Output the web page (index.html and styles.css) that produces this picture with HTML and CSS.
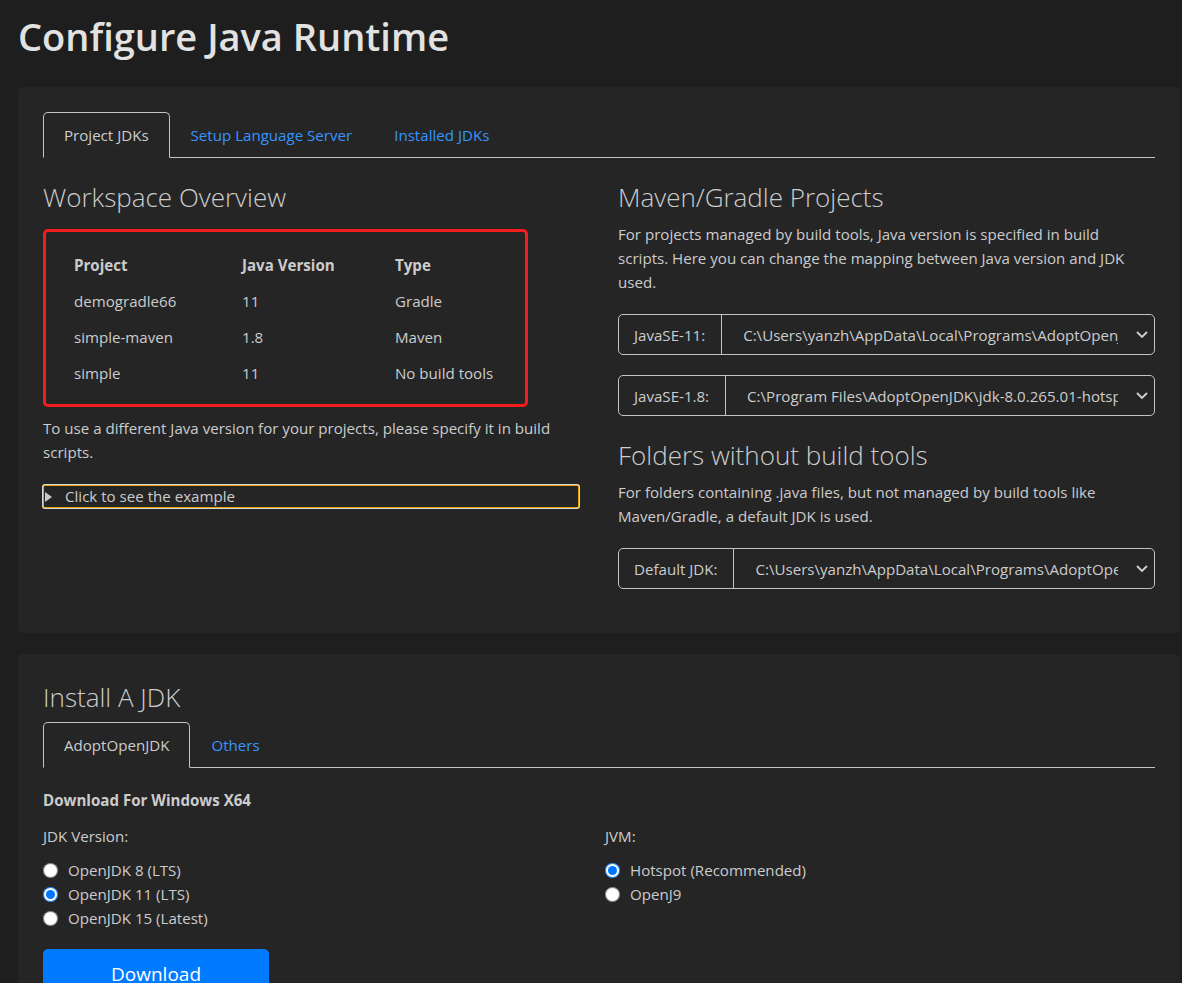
FILE: index.html
```html
<!DOCTYPE html>
<html lang="en">
<head>
<meta charset="utf-8">
<title>Configure Java Runtime</title>
<link rel="stylesheet" href="styles.css">
</head>
<body>
<main class="page">
  <h1 class="title">Configure Java Runtime</h1>

  <section class="card card-runtime">
    <nav class="tabs">
      <span class="tab active">Project JDKs</span>
      <span class="tab">Setup Language Server</span>
      <span class="tab">Installed JDKs</span>
    </nav>

    <div class="cols">
      <div class="col col-left">
        <h2 class="heading">Workspace Overview</h2>
        <div class="overview">
          <div class="ov-row ov-head">
            <span>Project</span><span>Java Version</span><span>Type</span>
          </div>
          <div class="ov-row">
            <span>demogradle66</span><span>11</span><span>Gradle</span>
          </div>
          <div class="ov-row">
            <span>simple-maven</span><span>1.8</span><span>Maven</span>
          </div>
          <div class="ov-row">
            <span>simple</span><span>11</span><span>No build tools</span>
          </div>
        </div>
        <p class="text note">To use a different Java version for your projects, please specify it in build scripts.</p>
        <div class="details"><span class="marker"></span><span>Click to see the example</span></div>
      </div>

      <div class="col col-right">
        <h2 class="heading">Maven/Gradle Projects</h2>
        <p class="text desc">For projects managed by build tools, Java version is specified in build scripts. Here you can change the mapping between Java version and JDK used.</p>
        <div class="select-group sg-1">
          <span class="sg-label">JavaSE-11:</span>
          <span class="sg-value"><span class="sg-text">C:\Users\yanzh\AppData\Local\Programs\AdoptOpenJDK\jdk-11.0.8.10-hotspot\</span></span>
          <svg class="chev" viewBox="0 0 12 8" width="12" height="8"><polyline points="1,1 6,6 11,1" fill="none" stroke="#d0d0d0" stroke-width="1.8"/></svg>
        </div>
        <div class="select-group sg-2">
          <span class="sg-label">JavaSE-1.8:</span>
          <span class="sg-value"><span class="sg-text">C:\Program Files\AdoptOpenJDK\jdk-8.0.265.01-hotspot\</span></span>
          <svg class="chev" viewBox="0 0 12 8" width="12" height="8"><polyline points="1,1 6,6 11,1" fill="none" stroke="#d0d0d0" stroke-width="1.8"/></svg>
        </div>

        <h2 class="heading heading-second">Folders without build tools</h2>
        <p class="text desc">For folders containing .java files, but not managed by build tools like Maven/Gradle, a default JDK is used.</p>
        <div class="select-group sg-3">
          <span class="sg-label">Default JDK:</span>
          <span class="sg-value"><span class="sg-text">C:\Users\yanzh\AppData\Local\Programs\AdoptOpenJDK\jdk-11.0.8.10-hotspot\</span></span>
          <svg class="chev" viewBox="0 0 12 8" width="12" height="8"><polyline points="1,1 6,6 11,1" fill="none" stroke="#d0d0d0" stroke-width="1.8"/></svg>
        </div>
      </div>
    </div>
  </section>

  <section class="card card-install">
    <h2 class="heading">Install A JDK</h2>
    <nav class="tabs">
      <span class="tab active">AdoptOpenJDK</span>
      <span class="tab">Others</span>
    </nav>
    <div class="download-for">Download For Windows X64</div>
    <div class="install-cols">
      <div class="install-col">
        <div class="text group-label">JDK Version:</div>
        <label class="radio"><input type="radio" name="jdk"><span>OpenJDK 8 (LTS)</span></label>
        <label class="radio"><input type="radio" name="jdk" checked><span>OpenJDK 11 (LTS)</span></label>
        <label class="radio"><input type="radio" name="jdk"><span>OpenJDK 15 (Latest)</span></label>
      </div>
      <div class="install-col">
        <div class="text group-label">JVM:</div>
        <label class="radio"><input type="radio" name="jvm" checked><span>Hotspot (Recommended)</span></label>
        <label class="radio"><input type="radio" name="jvm"><span>OpenJ9</span></label>
      </div>
    </div>
    <button class="btn-download" type="button">Download</button>
  </section>
</main>
</body>
</html>
```

FILE: styles.css
```css
* {
  box-sizing: border-box;
}

html, body {
  margin: 0;
  background: #1e1e1e;
}

body {
  font-family: "Open Sans", "Noto Sans", sans-serif;
  font-size: 15.1px;
  line-height: 24px;
  color: #cccccc;
}

.page {
  padding: 12px 2px 40px 18px;
}

.title {
  margin: 0 0 27px;
  font-size: 38px;
  line-height: 48px;
  font-weight: 600;
  color: #e2e2e2;
}

.card {
  background: #252526;
  border-radius: 5px;
  padding: 25px 25px 44px;
}

.card-install {
  margin-top: 21px;
  padding-bottom: 30px;
}

.tabs {
  display: flex;
  border-bottom: 1px solid #c3c3c3;
}

.tab {
  display: block;
  padding: 10px 20px;
  border: 1px solid transparent;
  border-radius: 5px 5px 0 0;
  margin-bottom: -1px;
  color: #3794ff;
  white-space: nowrap;
}

.tab.active {
  color: #cccccc;
  border-color: #c3c3c3 #c3c3c3 #252526;
  background: #252526;
}

.cols {
  display: grid;
  grid-template-columns: 541px 537px;
  column-gap: 34px;
}

.heading {
  margin: 22px 0 0;
  font-size: 26px;
  line-height: 34px;
  font-weight: 300;
  color: #cccccc;
}

.overview {
  width: 485px;
  margin-top: 15px;
  border: 3px solid #f41c1c;
  border-radius: 5px;
  padding: 15px 20px 13px 28px;
}

.ov-row {
  display: grid;
  grid-template-columns: 168px 153px 1fr;
  line-height: 36px;
}

.ov-head {
  font-weight: 700;
}

.text {
  margin: 0;
}

.note {
  margin-top: 9px;
}

.details {
  display: flex;
  align-items: center;
  width: 538px;
  height: 25px;
  margin: 20px 0 0 -1px;
  border: 2px solid #e8a10b;
  outline: 1px solid #d8d8d8;
  outline-offset: -1px;
  border-radius: 3px;
  line-height: 21px;
}

.marker {
  width: 0;
  height: 0;
  margin: 0 13px 0 1px;
  border-top: 5px solid transparent;
  border-bottom: 5px solid transparent;
  border-left: 7px solid #c8c8c8;
}

.desc {
  margin-top: 8px;
  max-width: 520px;
}

.heading-second {
  margin-top: 22px;
}

.select-group {
  display: flex;
  align-items: center;
  height: 41px;
  margin-top: 20px;
  border: 1px solid #c3c3c3;
  border-radius: 5px;
}

.sg-label {
  height: 100%;
  display: flex;
  align-items: center;
  padding: 0 16px 0 15px;
  border-right: 1px solid #c3c3c3;
  white-space: nowrap;
}

.sg-value {
  flex: 1;
  min-width: 0;
  overflow: hidden;
  padding-left: 21px;
  margin-right: 18px;
}

.sg-text {
  display: block;
  white-space: nowrap;
  overflow: hidden;
}

.chev {
  flex: none;
  margin-right: 6px;
}

.card-install .heading {
  margin-top: 1px;
}

.card-install .tabs {
  margin-top: 8px;
}

.download-for {
  margin-top: 20px;
  font-weight: 700;
}

.install-cols {
  display: grid;
  grid-template-columns: 562px 1fr;
  margin-top: 12px;
}

.group-label {
  margin-bottom: 10px;
}

.radio {
  display: flex;
  align-items: center;
  height: 24px;
}

.radio input {
  width: 15px;
  height: 15px;
  margin: 0 10px 0 0;
  accent-color: #0075ff;
}

.btn-download {
  display: block;
  width: 226px;
  height: 48px;
  margin-top: 19px;
  border: 0;
  border-radius: 5px;
  background: #007bff;
  color: #ffffff;
  font-family: "Open Sans", "Noto Sans", sans-serif;
  font-size: 19px;
  line-height: 50px;
  padding: 0;
}
```
